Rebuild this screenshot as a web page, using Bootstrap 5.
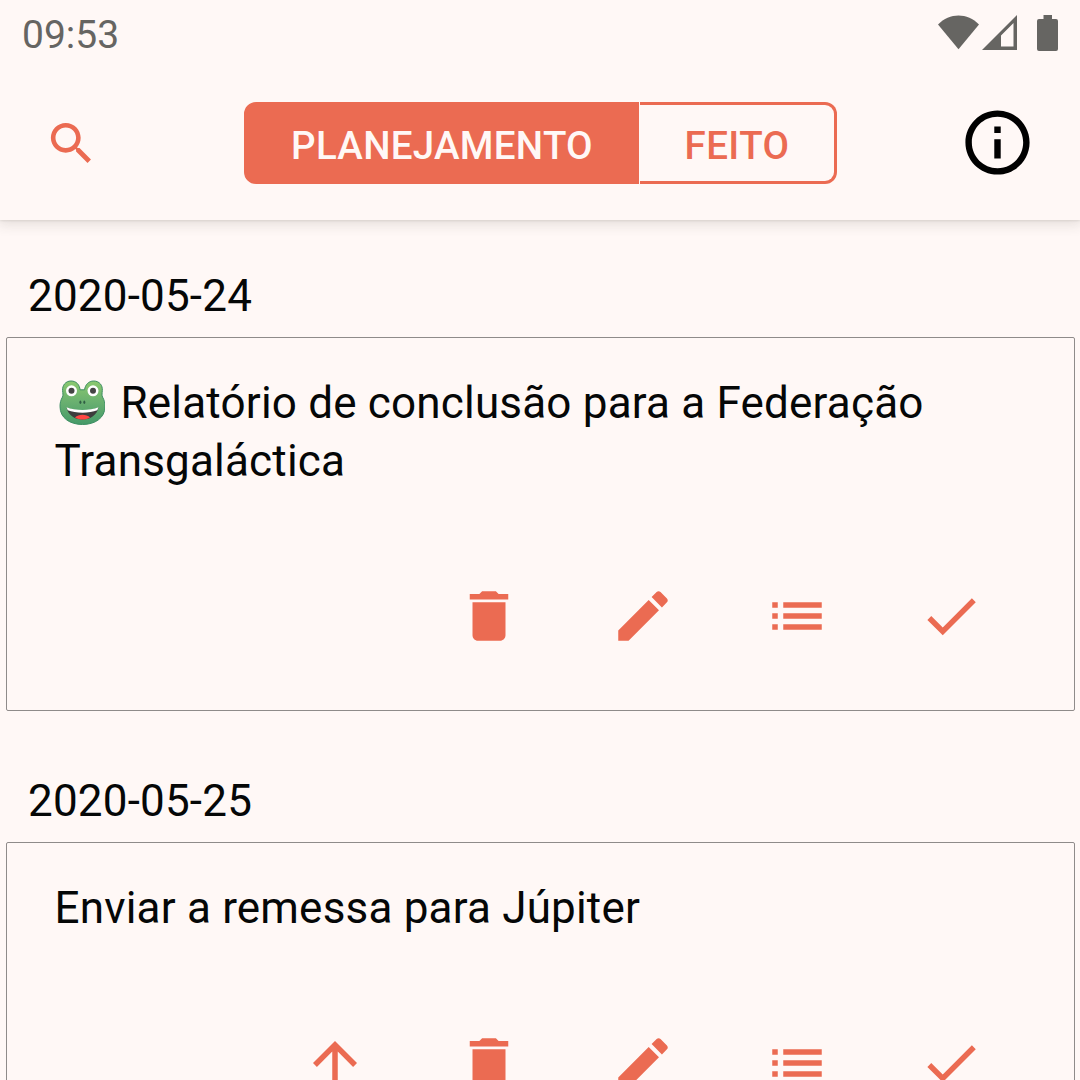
<!DOCTYPE html>
<html lang="pt-BR">
<head>
<meta charset="utf-8">
<meta name="viewport" content="width=device-width, initial-scale=1">
<title>Planejamento</title>
<link rel="stylesheet" href="https://cdn.jsdelivr.net/npm/bootstrap@5.3.0/dist/css/bootstrap.min.css">
<style>
  :root { --coral: #eb6b52; --paper: #fff8f6; }
  body { background: var(--paper); color: #050707; font-family: Roboto, sans-serif; font-size: 44px; line-height: 58px; letter-spacing: .19px; }
  .screen { width: 1080px; height: 1080px; }
  .status { height: 66px; padding: 3px 21px 0 22px; color: #666562; font-size: 39px; line-height: 65px; letter-spacing: 0; }
  .status svg { margin-top: -4px; }
  .status-time { padding-top: 2px; }
  .appbar { height: 154px; padding: 0 44px; }
  .appbar-wrap { background: var(--paper); box-shadow: 0 1px 2px rgba(50,50,40,.1), 0 3px 12px 2px rgba(50,50,40,.12); }
  .search-slot { width: 77px; }
  .info-icon { margin-top: -2px; }
  .switcher { height: 82px; }
  .switcher .btn { border: 3px solid var(--coral); border-radius: 12px; font-size: 38.5px; font-weight: 500; line-height: 1; letter-spacing: .28px; padding: 7px 0 0 2px; color: var(--coral); }
  .switcher .btn.active { background: var(--coral); color: var(--paper); border-color: var(--coral); width: 395px; }
  .switcher .btn.later { width: 197px; margin-left: 1px !important; border-left: 0; letter-spacing: .45px; padding-left: 1px; }
  .icon-btn { width: 154px; height: 66px; color: var(--coral); }
  .day { height: 117px; padding: 47px 28px 0; }
  .task-box { height: 374px; margin: 0 5px 14px 6px; padding: 36px 47px 0 47.5px; border: 1px solid #8f8b8a; border-radius: 2px; background: transparent; }
  .task-text { height: 209px; }
  .task-text.brief { height: 151px; }
  .actions { margin-right: -1px; }
  .frog { width: 66px; height: 45px; padding-left: 4.5px; padding-right: 15.5px; margin-top: -7px; }
</style>
<script defer src="https://cdn.jsdelivr.net/npm/bootstrap@5.3.0/dist/js/bootstrap.bundle.min.js"></script>
</head>
<body class="overflow-hidden">
<svg class="d-none" aria-hidden="true">
  <symbol id="i-trash" viewBox="0 0 24 24"><path d="M6 19c0 1.1.9 2 2 2h8c1.1 0 2-.9 2-2V7H6v12zM19 4h-3.5l-1-1h-5l-1 1H5v2h14V4z"/></symbol>
  <symbol id="i-edit" viewBox="0 0 24 24"><path d="M3 17.25V21h3.75L17.81 9.94l-3.75-3.75L3 17.25zM20.71 7.04c.39-.39.39-1.02 0-1.41l-2.34-2.34c-.39-.39-1.02-.39-1.41 0l-1.83 1.83 3.75 3.75 1.83-1.83z"/></symbol>
  <symbol id="i-list" viewBox="0 0 24 24"><path d="M3 13h2v-2H3v2zm0 4h2v-2H3v2zm0-8h2V7H3v2zm4 4h14v-2H7v2zm0 4h14v-2H7v2zM7 7v2h14V7H7z"/></symbol>
  <symbol id="i-check" viewBox="0 0 24 24"><path d="M9 16.17L4.83 12l-1.42 1.41L9 19 21 7l-1.41-1.41z"/></symbol>
  <symbol id="i-up" viewBox="0 0 24 24"><path d="M4 12l1.41 1.41L11 7.83V20h2V7.83l5.58 5.59L20 12l-8-8-8 8z"/></symbol>
</svg>
<div class="screen overflow-hidden d-flex flex-column">
  <div class="appbar-wrap flex-shrink-0">
    <div class="status d-flex justify-content-between align-items-center">
      <span class="status-time">09:53</span>
      <svg width="122" height="38" viewBox="937 14 122 38" fill="currentColor">
        <path d="M938 24.4C949.5 12.4 967.500 12.4 979 24.4L958.500 49.300Z"/>
        <path fill-rule="evenodd" d="M982 50L1017 15V50ZM1001 35.500V46.500H1013.500V23Z"/>
        <path d="M1043.500 15h8.500v4h4a2 2 0 0 1 2 2v28a2 2 0 0 1-2 2h-17a2 2 0 0 1-2-2V21a2 2 0 0 1 2-2h4.500z"/>
      </svg>
    </div>
    <nav class="appbar d-flex justify-content-between align-items-center">
      <div class="search-slot d-flex"><svg width="55" height="55" viewBox="0 0 24 24" fill="var(--coral)"><path d="M15.500 14h-.79l-.28-.27C15.410 12.590 16 11.110 16 9.500 16 5.910 13.090 3 9.500 3S3 5.910 3 9.500 5.910 16 9.500 16c1.610 0 3.090-.59 4.230-1.570l.27.28v.79l5 4.990L20.490 19l-4.990-5zm-6 0C7.010 14 5 11.990 5 9.500S7.010 5 9.500 5 14 7.010 14 9.500 11.990 14 9.500 14z"/></svg></div>
      <div class="btn-group switcher" role="group">
        <button type="button" class="btn active">PLANEJAMENTO</button>
        <button type="button" class="btn later">FEITO</button>
      </div>
      <svg class="info-icon" width="77" height="77" viewBox="0 0 24 24"><path d="M11 17h2v-6h-2v6zm1-15C6.480 2 2 6.480 2 12s4.480 10 10 10 10-4.480 10-10S17.520 2 12 2zm0 18c-4.410 0-8-3.590-8-8s3.590-8 8-8 8 3.590 8 8-3.590 8-8 8zM11 9h2V7h-2v2z"/></svg>
    </nav>
  </div>
  <main>
    <div class="day">2020-05-24</div>
    <div class="card task-box">
      <div class="task-text"><svg class="frog" viewBox="0 0 46 45" role="img" aria-label="Sapo">
          <defs><linearGradient id="skin" x1="0" y1="0" x2="0" y2="1"><stop offset="0" stop-color="#8bc96f"/><stop offset=".5" stop-color="#68af70"/><stop offset="1" stop-color="#459a69"/></linearGradient></defs>
          <path fill="url(#skin)" stroke="#3e8e63" stroke-width="1" d="M11.500 1C17 1 20 4.800 20.600 9.800H25C25.800 4.800 29 1 34.200 1C40 1 43.300 5.500 42.800 10.500C42.600 13.500 42.200 15 43 17C44.800 20 45.500 23 45.500 26.500C45.500 38 35.500 44.500 23 44.500S.5 38 .5 26.500C.5 23 1.200 20 3 17C3.800 15 3.300 13.500 3.100 10.500C2.700 5.500 6 1 11.500 1z"/>
          <circle cx="12" cy="10.800" r="5.500" fill="#fff"/><circle cx="33.500" cy="10.800" r="5.500" fill="#fff"/>
          <circle cx="12" cy="10.800" r="3" fill="#444"/><circle cx="33.500" cy="10.800" r="3" fill="#444"/>
          <ellipse cx="20.900" cy="22.300" rx="1" ry="1.800" fill="#315f45"/><ellipse cx="24.800" cy="22.300" rx="1" ry="1.800" fill="#315f45"/>
          <path fill="#3d3d3d" d="M7 27.500c9 4 23 4 32 0C37.500 35 31 39.500 23 39.500S8.500 35 7 27.500z"/>
          <path fill="#fff" d="M7 27.200c9 3.700 23 3.700 32 0l-1.200 3c-8 3.300-21.600 3.300-29.600 0z"/>
          <path fill="#ff4743" d="M15.500 37.500c3.500-3.800 11.500-3.800 15 0-4.500 2.700-10.500 2.700-15 0z"/>
        </svg>Relatório de conclusão para a Federação Transgaláctica</div>
      <div class="actions d-flex justify-content-end">
        <svg class="icon-btn" fill="currentColor"><use href="#i-trash"/></svg>
        <svg class="icon-btn" fill="currentColor"><use href="#i-edit"/></svg>
        <svg class="icon-btn" fill="currentColor"><use href="#i-list"/></svg>
        <svg class="icon-btn" fill="currentColor"><use href="#i-check"/></svg>
      </div>
    </div>
    <div class="day">2020-05-25</div>
    <div class="card task-box">
      <div class="task-text brief">Enviar a remessa para Júpiter</div>
      <div class="actions d-flex justify-content-end">
        <svg class="icon-btn" fill="currentColor"><use href="#i-up"/></svg>
        <svg class="icon-btn" fill="currentColor"><use href="#i-trash"/></svg>
        <svg class="icon-btn" fill="currentColor"><use href="#i-edit"/></svg>
        <svg class="icon-btn" fill="currentColor"><use href="#i-list"/></svg>
        <svg class="icon-btn" fill="currentColor"><use href="#i-check"/></svg>
      </div>
    </div>
  </main>
</div>
</body>
</html>
